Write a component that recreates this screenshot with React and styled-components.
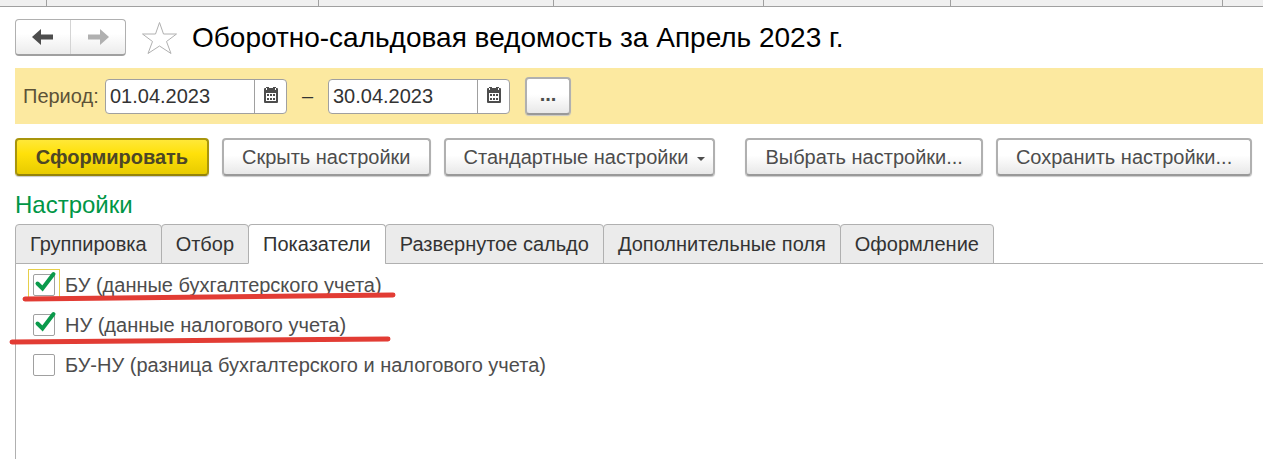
import React, { useState } from "react";
import styled, { createGlobalStyle, css } from "styled-components";

const GlobalStyle = createGlobalStyle`
  *, *::before, *::after {
    box-sizing: border-box;
  }

  body {
    margin: 0;
    background-color: #ffffff;
    color: #4d4d4d;
    font-family: Arial, "Liberation Sans", sans-serif;
    font-size: 20px;
    line-height: 24px;
  }

  button, input {
    font: inherit;
    color: inherit;
  }
`;

const Page = styled.div`
  display: flex;
  flex-direction: column;
  min-height: 100vh;
  overflow: hidden;
`;

const WindowTabs = styled.div`
  display: flex;
  height: 7px;
  background-color: #f0f0f0;
  border-bottom: 1px solid #a0a0a0;
`;

const WindowTab = styled.div`
  flex: 0 0 ${({ $width }) => $width}px;
  border-right: 1px solid #a0a0a0;
`;

const Content = styled.main`
  display: flex;
  flex: 1;
  flex-direction: column;
  padding: 12px 0 0 15px;
`;

const Header = styled.header`
  display: flex;
  align-items: center;
  height: 37px;
`;

const History = styled.div`
  display: flex;
  width: 111px;
  height: 37px;
  border: 1px solid #b0b0b0;
  border-bottom: 2px solid #a0a0a0;
  border-radius: 4px;
  background: linear-gradient(#ffffff 40%, #ececec);
`;

const HistoryButton = styled.button`
  display: flex;
  flex: 1;
  align-items: center;
  justify-content: center;
  padding: 0;
  border: none;
  background: none;
  color: #4d4d4d;

  & + & {
    border-left: 1px solid #d4d4d4;
  }

  &:disabled {
    color: #b0b0b0;
  }
`;

const StarButton = styled.button`
  display: flex;
  margin: 0 12px 0 14px;
  padding: 0;
  border: none;
  background: none;
`;

const Title = styled.h1`
  margin: 0;
  color: #000000;
  font-size: 28px;
  font-weight: normal;
  line-height: 36px;
  white-space: nowrap;
`;

const PeriodBar = styled.div`
  display: flex;
  align-items: center;
  height: 56px;
  margin-top: 12px;
  padding-left: 8px;
  background-color: #fce9a0;
`;

const PeriodLabel = styled.label`
  width: 82px;
  color: #5c5237;
`;

const DateField = styled.div`
  display: flex;
  width: 182px;
  height: 35px;
  overflow: hidden;
  border: 1px solid #a0a0a0;
  border-radius: 4px;
  background-color: #ffffff;
`;

const DateInput = styled.input`
  flex: 1;
  min-width: 0;
  padding: 0 4px;
  border: none;
  outline: none;
  background: none;
  color: #333333;
`;

const CalendarButton = styled.button`
  display: flex;
  align-items: center;
  justify-content: center;
  width: 32px;
  padding: 0 0 2px;
  border: none;
  border-left: 1px solid #a0a0a0;
  background: none;
`;

const Dash = styled.span`
  width: 41px;
  color: #333333;
  text-align: center;
`;

const Button = styled.button`
  display: flex;
  align-items: center;
  justify-content: center;
  height: 38px;
  padding: 0 18px;
  border: 2px solid #b0b0b0;
  border-bottom-color: #999999;
  border-radius: 4px;
  background: linear-gradient(#ffffff 45%, #e8e8e8);
  box-shadow: 0 1px 1px #c8c8c8;
  white-space: nowrap;

  ${({ $primary }) =>
    $primary &&
    css`
      min-width: 194px;
      border-color: #a8950c;
      border-bottom-color: #94830a;
      background: linear-gradient(#ffe838, #ffe10a 40%, #e8cb00);
      color: #4d4726;
      font-weight: bold;
    `}
`;

const MoreButton = styled(Button)`
  width: 46px;
  margin-left: 15px;
  padding: 0 0 4px;
  font-weight: bold;
`;

const Toolbar = styled.div`
  display: flex;
  gap: 13px;
  margin-top: 14px;
`;

const ToolbarGroup = styled.div`
  display: flex;
  gap: 13px;

  & + & {
    margin-left: 17px;
  }
`;

const Caret = styled.span`
  margin: 4px -10px 0 9px;
  border: 4px solid transparent;
  border-top-color: #4d4d4d;
  border-bottom: none;
`;

const SectionTitle = styled.h2`
  margin: 14px 0 4px;
  color: #009646;
  font-size: 24px;
  font-weight: normal;
  line-height: 30px;
`;

const TabList = styled.div`
  position: relative;
  z-index: 1;
  display: flex;
`;

const Tab = styled.button`
  height: 40px;
  margin-right: -1px;
  padding: 0 14px;
  border: 1px solid #b0b0b0;
  border-radius: 4px 4px 0 0;
  background-color: #ebebeb;
  color: #333333;
  white-space: nowrap;

  &[aria-selected="true"] {
    border-bottom-color: #ffffff;
    background-color: #ffffff;
  }
`;

const TabPanel = styled.div`
  position: relative;
  display: flex;
  flex: 1;
  flex-direction: column;
  align-items: flex-start;
  gap: 16px;
  margin-top: -1px;
  padding: 9px 0 0 17px;
  border-top: 1px solid #b0b0b0;
  border-left: 1px solid #b0b0b0;
`;

const Option = styled.label`
  display: flex;
  align-items: center;
  gap: 10px;
  height: 24px;
  white-space: nowrap;
`;

const CheckboxBox = styled.span`
  position: relative;
  display: flex;
  outline: ${({ $focused }) => ($focused ? "1px solid #e6cf4a" : "none")};
  outline-offset: 4px;
`;

const CheckboxInput = styled.input`
  width: 22px;
  height: 22px;
  margin: 0;
  appearance: none;
  border: 1px solid #a0a0a0;
  border-radius: 2px;
  background-color: #ffffff;
`;

const CheckMark = styled.svg`
  position: absolute;
  top: -3px;
  left: 0;
  pointer-events: none;
`;

const Marker = styled.svg`
  position: absolute;
  top: 26px;
  left: -8px;
  pointer-events: none;
`;

const ArrowIcon = ({ flipped }) => (
  <svg width="22" height="16" viewBox="0 0 22 16" aria-hidden="true">
    <path
      d="M0 8 L9 0 V5.500 H21 V10.500 H9 V16 Z"
      fill="currentColor"
      transform={flipped ? "translate(22 0) scale(-1 1)" : undefined}
    />
  </svg>
);

const StarIcon = () => (
  <svg width="40" height="36" viewBox="0 0 40 36" aria-hidden="true">
    <path
      d="M19.500 2.500 L23.500 14 H36.500 L26.500 21.500 L31 33.500 L19.500 26 L8 33.500 L12.500 21.500 L2.500 14 H15.500 Z"
      fill="#ffffff"
      stroke="#b0b0b0"
    />
  </svg>
);

const CalendarIcon = () => (
  <svg width="14" height="16" viewBox="0 0 14 16" aria-hidden="true">
    <path
      d="M1 1 H2 V0 H5 V1 H9 V0 H12 V1 H13 Q14 1 14 2 V15 Q14 16 13 16 H1 Q0 16 0 15 V2 Q0 1 1 1 Z"
      fill="#4d4d4d"
    />
    <path d="M2 1 H3 V3 H2 Z M11 1 H12 V3 H11 Z M2 6 H12 V14 H2 Z" fill="#ffffff" />
    <path
      d="M3 7 H5 V9 H3 Z M6 7 H8 V9 H6 Z M9 7 H11 V9 H9 Z M3 11 H5 V13 H3 Z M6 11 H8 V13 H6 Z M9 11 H11 V13 H9 Z"
      fill="#4d4d4d"
    />
  </svg>
);

const windowTabs = [47, 272, 235, 210, 187, 272];

const tabs = [
  "Группировка",
  "Отбор",
  "Показатели",
  "Развернутое сальдо",
  "Дополнительные поля",
  "Оформление"
];

const options = [
  { id: "bu", label: "БУ (данные бухгалтерского учета)", focused: true },
  { id: "nu", label: "НУ (данные налогового учета)" },
  { id: "diff", label: "БУ-НУ (разница бухгалтерского и налогового учета)" }
];

const DatePicker = ({ id, label, defaultValue }) => (
  <DateField>
    <DateInput id={id} aria-label={label} defaultValue={defaultValue} />
    <CalendarButton type="button" aria-label="Открыть календарь">
      <CalendarIcon />
    </CalendarButton>
  </DateField>
);

const Checkbox = ({ label, focused, checked, onChange }) => (
  <Option>
    <CheckboxBox $focused={focused}>
      <CheckboxInput type="checkbox" checked={checked} onChange={onChange} />
      {checked && (
        <CheckMark width="26" height="24" viewBox="0 0 26 24" aria-hidden="true">
          <path
            d="M4.500 12.500 L9.500 17.500 L20.500 3"
            fill="none"
            stroke="#0a9a4b"
            strokeWidth="4"
            strokeLinecap="round"
          />
        </CheckMark>
      )}
    </CheckboxBox>
    {label}
  </Option>
);

const App = () => {
  const [activeTab, setActiveTab] = useState("Показатели");
  const [values, setValues] = useState({ bu: true, nu: true, diff: false });

  const toggle = id => setValues({ ...values, [id]: !values[id] });

  return (
    <Page>
      <GlobalStyle />
      <WindowTabs>
        {windowTabs.map((width, index) => (
          <WindowTab key={index} $width={width} />
        ))}
      </WindowTabs>
      <Content>
        <Header>
          <History>
            <HistoryButton type="button" aria-label="Назад">
              <ArrowIcon />
            </HistoryButton>
            <HistoryButton type="button" aria-label="Вперед" disabled>
              <ArrowIcon flipped />
            </HistoryButton>
          </History>
          <StarButton type="button" aria-label="Избранное">
            <StarIcon />
          </StarButton>
          <Title>Оборотно-сальдовая ведомость за Апрель 2023 г.</Title>
        </Header>

        <PeriodBar>
          <PeriodLabel htmlFor="date-from">Период:</PeriodLabel>
          <DatePicker id="date-from" defaultValue="01.04.2023" />
          <Dash>–</Dash>
          <DatePicker
            id="date-to"
            label="Конец периода"
            defaultValue="30.04.2023"
          />
          <MoreButton type="button">...</MoreButton>
        </PeriodBar>

        <Toolbar>
          <ToolbarGroup>
            <Button type="button" $primary>
              Сформировать
            </Button>
            <Button type="button">Скрыть настройки</Button>
            <Button type="button">
              Стандартные настройки
              <Caret />
            </Button>
          </ToolbarGroup>
          <ToolbarGroup>
            <Button type="button">Выбрать настройки...</Button>
            <Button type="button">Сохранить настройки...</Button>
          </ToolbarGroup>
        </Toolbar>

        <SectionTitle>Настройки</SectionTitle>
        <TabList role="tablist">
          {tabs.map(tab => (
            <Tab
              key={tab}
              type="button"
              role="tab"
              aria-selected={tab === activeTab}
              onClick={() => setActiveTab(tab)}
            >
              {tab}
            </Tab>
          ))}
        </TabList>
        <TabPanel role="tabpanel">
          {options.map(({ id, label, focused }) => (
            <Checkbox
              key={id}
              label={label}
              focused={focused}
              checked={values[id]}
              onChange={() => toggle(id)}
            />
          ))}
          <Marker width="392" height="60" viewBox="0 0 392 60" aria-hidden="true">
            <path
              d="M17 9 Q200 7 385 5 M4 52 Q190 50 380 49"
              fill="none"
              stroke="#e23c34"
              strokeWidth="5"
              strokeLinecap="round"
            />
          </Marker>
        </TabPanel>
      </Content>
    </Page>
  );
};

export default App;
